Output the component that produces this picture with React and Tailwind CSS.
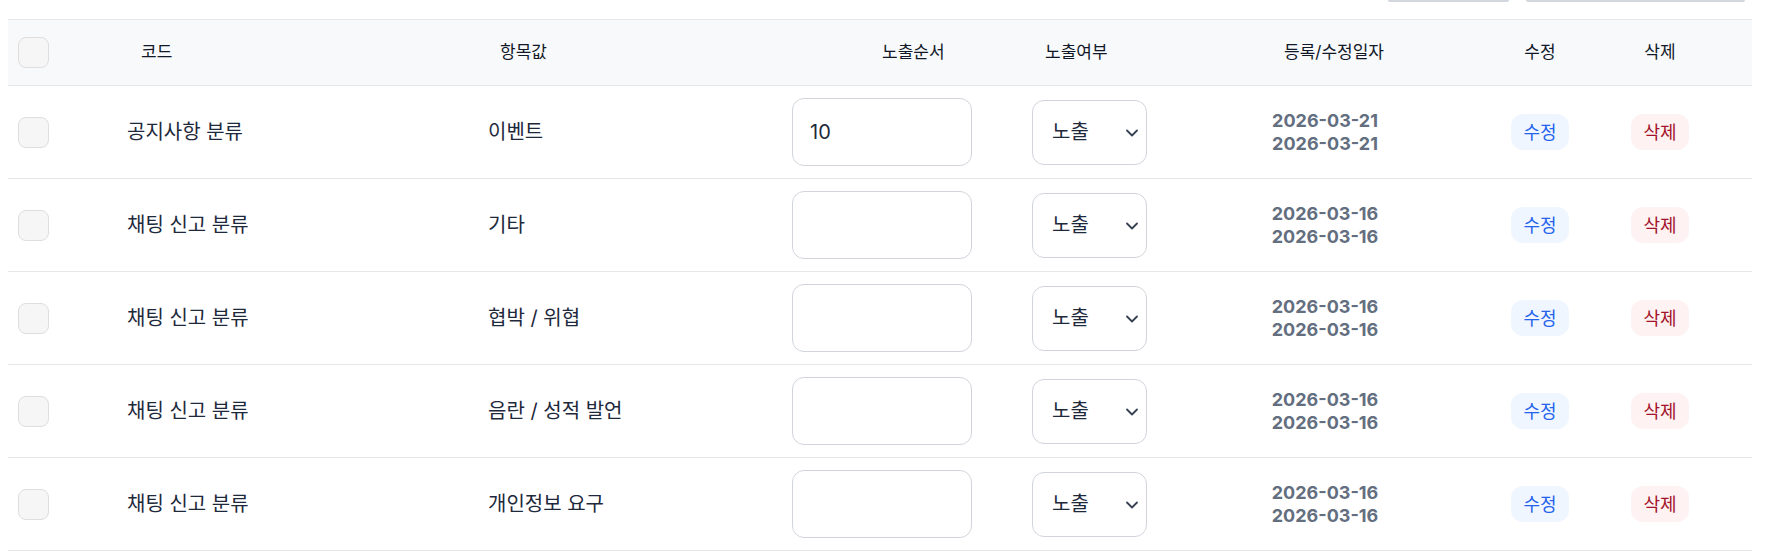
import React from 'react';
import { ChevronDown } from 'lucide-react';

const rows = [
  { code: '공지사항 분류', value: '이벤트', order: '10', date: '2026-03-21' },
  { code: '채팅 신고 분류', value: '기타', order: '', date: '2026-03-16' },
  { code: '채팅 신고 분류', value: '협박 / 위협', order: '', date: '2026-03-16' },
  { code: '채팅 신고 분류', value: '음란 / 성적 발언', order: '', date: '2026-03-16' },
  { code: '채팅 신고 분류', value: '개인정보 요구', order: '', date: '2026-03-16' },
];

const cols = 'grid grid-cols-[102px_350px_320px_230px_180px_270px_160px_80px_1fr] items-center';

const Checkbox = () => (
  <div className="ml-[10px] w-[31px] h-[31px] rounded-lg border border-[#dedede] bg-[#f6f6f6]" />
);

export default function App() {
  return (
    <div className="w-[1766px] h-[560px] bg-white text-[#1e293b]" style={{ fontFamily: 'Inter, "Noto Sans CJK KR", sans-serif' }}>
      {/* toolbar buttons above, only their bottom edges are visible */}
      <div className="flex justify-end gap-[17px] pr-[21px] h-[2px]">
        <div className="w-[121px] h-[2px] rounded-b-md bg-[#d2d6dd]" />
        <div className="w-[219px] h-[2px] rounded-b-md bg-[#d2d6dd]" />
      </div>

      <div className="mt-[17px] ml-[8px] w-[1744px]">
        <div className={`${cols} h-[67px] bg-[#f8f9fb] border-y border-[#e5e7eb] text-[17px] text-[#111827]`}>
          <div><Checkbox /></div>
          <div className="pl-[31px]">코드</div>
          <div className="pl-[40px]">항목값</div>
          <div className="pl-[102px]">노출순서</div>
          <div className="pl-[35px]">노출여부</div>
          <div className="pl-[18px] text-center">등록/수정일자</div>
          <div className="text-center">수정</div>
          <div className="text-center">삭제</div>
          <div />
        </div>

        {rows.map((row, i) => (
          <div key={i} className={`${cols} py-3 border-b border-[#e5e7eb] text-[20px]`}>
            <div><Checkbox /></div>
            <div className="pl-[17px]">{row.code}</div>
            <div className="pl-[28px]">{row.value}</div>
            <div className="pl-[12px]">
              <input
                readOnly
                value={row.order}
                className="w-[180px] h-[68px] rounded-xl border border-[#d1d5db] bg-white pl-[17px] text-[20px] text-[#1e293b] outline-none"
              />
            </div>
            <div className="pl-[22px]">
              <div className="relative w-[115px] h-[65px]">
                <select
                  defaultValue="노출"
                  className="appearance-none w-full h-full rounded-xl border border-[#d1d5db] bg-white pl-[19px] text-[20px] text-[#1e293b] outline-none"
                >
                  <option>노출</option>
                  <option>미노출</option>
                </select>
                <ChevronDown className="absolute right-[5px] top-[23px] w-[20px] h-[20px] text-[#374151] pointer-events-none" strokeWidth={2.2} />
              </div>
            </div>
            <div className="text-center text-[18px] font-bold leading-[23px] text-[#636e7f]">
              <div>{row.date}</div>
              <div>{row.date}</div>
            </div>
            <div className="flex justify-center">
              <button className="w-[58px] h-[36px] rounded-xl bg-[#eff6ff] text-[18px] text-[#2563eb]">수정</button>
            </div>
            <div className="flex justify-center">
              <button className="w-[58px] h-[36px] rounded-xl bg-[#fef2f2] text-[18px] text-[#a3122a]">삭제</button>
            </div>
            <div />
          </div>
        ))}
      </div>
    </div>
  );
}
